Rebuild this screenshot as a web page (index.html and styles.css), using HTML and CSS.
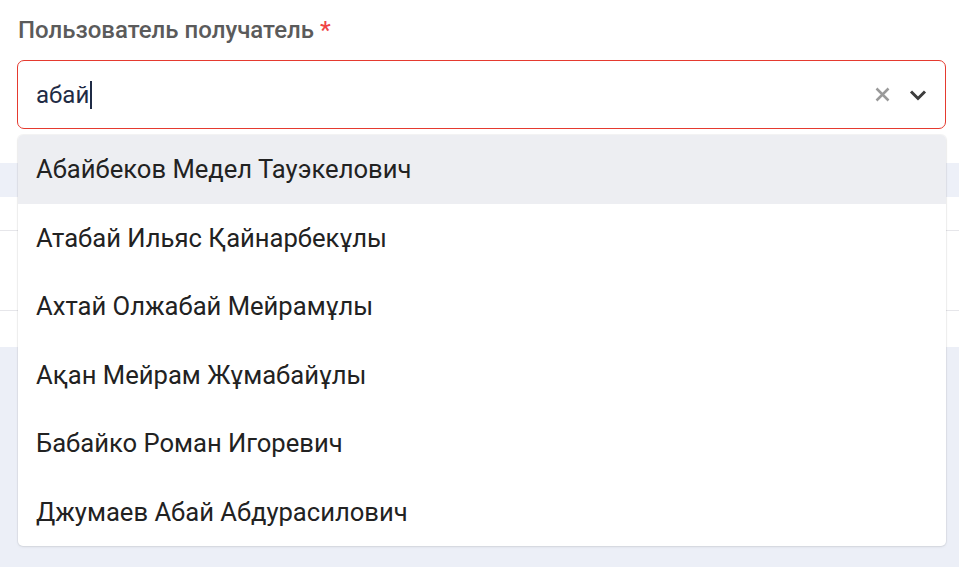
FILE: index.html
```html
<!DOCTYPE html>
<html lang="ru">
<head>
<meta charset="utf-8">
<link rel="stylesheet" href="styles.css">
</head>
<body>
<div class="page">
  <div class="field">
    <div class="label">Пользователь получатель <span class="req">*</span></div>
    <div class="select">
      <div class="value">абай<span class="caret"></span></div>
      <div class="icons">
        <svg class="clear" width="15" height="15" viewBox="0 0 15 15"><path d="M1.5 1.5L13.5 13.5M13.5 1.5L1.5 13.5" stroke="#9a9a9a" stroke-width="2.5" fill="none"/></svg>
        <svg class="chev" width="18" height="12" viewBox="0 0 18 12"><path d="M2 2.5L9 9.5L16 2.5" stroke="#3d3d3d" stroke-width="3" fill="none"/></svg>
      </div>
    </div>
  </div>
  <div class="under">
    <div class="strip"></div>
    <div class="table">
      <div class="trow"></div>
      <div class="trow"></div>
      <div class="trow last"></div>
    </div>
    <div class="rest"></div>
  </div>
  <ul class="menu">
    <li class="opt active">Абайбеков Медел Тауэкелович</li>
    <li class="opt">Атабай Ильяс Қайнарбекұлы</li>
    <li class="opt">Ахтай Олжабай Мейрамұлы</li>
    <li class="opt">Ақан Мейрам Жұмабайұлы</li>
    <li class="opt">Бабайко Роман Игоревич</li>
    <li class="opt">Джумаев Абай Абдурасилович</li>
  </ul>
</div>
</body>
</html>
```
FILE: styles.css
```css
* { box-sizing: border-box; }
html, body { margin: 0; padding: 0; }
body {
  width: 959px;
  height: 567px;
  overflow: hidden;
  font-family: Roboto, "Noto Sans", "Liberation Sans", sans-serif;
  background: #eceff7;
}
.page {
  position: relative;
  width: 959px;
  height: 567px;
}
.field {
  background: #fff;
  padding: 15px 13px 0 17px;
  height: 163px;
}
.label {
  font-size: 24px;
  font-weight: 500;
  color: #5b5b5b;
  line-height: 30px;
  height: 45px;
  padding-left: 1px;
}
.req { color: #f04444; }
.select {
  height: 69px;
  border: 1px solid #e53a2f;
  border-radius: 7px;
  display: flex;
  align-items: center;
  padding: 0 18px 0 18px;
}
.value {
  flex: 1;
  font-size: 24px;
  color: #1f2b45;
  display: flex;
  align-items: center;
}
.caret {
  display: inline-block;
  width: 1.5px;
  height: 28px;
  background: #1f2b45;
  margin-left: 1px;
}
.icons {
  display: flex;
  align-items: center;
  gap: 19px;
}
.under { display: flex; flex-direction: column; }
.strip { height: 34px; background: #edf0f8; }
.table { background: #fff; }
.trow { height: 34px; border-bottom: 1px solid #e6e6ea; }
.trow:nth-child(2) { height: 80px; }
.trow.last { height: 36px; border-bottom: 0; }
.menu {
  position: absolute;
  left: 18px;
  top: 135px;
  width: 928px;
  margin: 0;
  padding: 0;
  list-style: none;
  background: #fff;
  border-radius: 5px;
  box-shadow: 0 0 0 1px rgba(0,0,0,0.04), 0 1px 3px rgba(0,0,0,0.08);
  overflow: hidden;
}
.opt {
  height: 68.5px;
  display: flex;
  align-items: center;
  padding-left: 18px;
  font-size: 25.6px;
  color: #222;
}
.opt.active { background: #edeef2; }
```
